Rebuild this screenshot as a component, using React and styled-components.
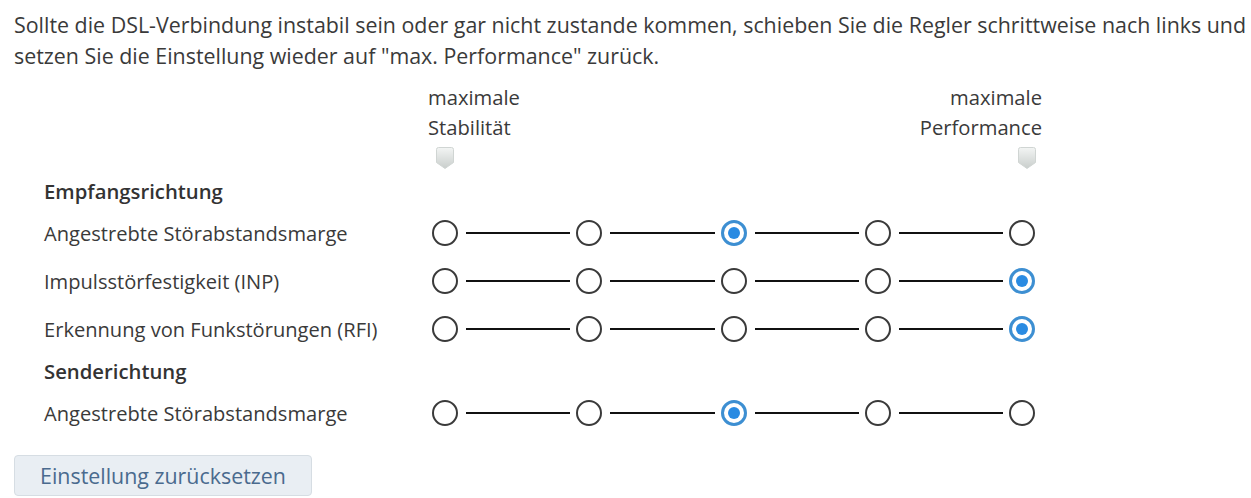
import React, { useState } from 'react'
import styled, { createGlobalStyle } from 'styled-components'

const GlobalStyle = createGlobalStyle`
  html, body {
    margin: 0;
    padding: 0;
    background: #ffffff;
  }
  body {
    font-family: "Open Sans", "Noto Sans", "Liberation Sans", sans-serif;
    color: #3a3a3a;
  }
`

const Page = styled.div`
  padding: 9px 0 0 14px;
  width: 1237px;
`

const Intro = styled.p`
  margin: 0;
  font-size: 21.4px;
  line-height: 31px;
  color: #3a3a3a;
  white-space: nowrap;
`

const Panel = styled.div`
  display: grid;
  grid-template-columns: 388px 603px;
  padding-left: 30px;
  margin-top: 11px;
`

const Scale = styled.div`
  grid-column: 2;
  display: flex;
  flex-direction: column;
  margin: 0 -7px 0 -4px;
`

const ScaleLabels = styled.div`
  display: flex;
  justify-content: space-between;
  font-size: 20.2px;
  line-height: 30px;
  color: #3a3a3a;
`

const ScaleLabel = styled.div`
  text-align: ${(p) => (p.$right ? 'right' : 'left')};
`

const Markers = styled.div`
  display: flex;
  justify-content: space-between;
  padding: 0 6px 0 8px;
  margin-top: 5px;
  height: 26px;
`

const Marker = () => (
  <svg width="18" height="22" viewBox="0 0 18 22">
    <defs>
      <linearGradient id="mk" x1="0" y1="0" x2="0" y2="1">
        <stop offset="0" stopColor="#f3f5f4" />
        <stop offset="1" stopColor="#c9cecc" />
      </linearGradient>
    </defs>
    <path
      d="M0.5 2.5 Q0.5 0.5 2.5 0.5 H15.5 Q17.5 0.5 17.5 2.5 V15.5 L9 21.5 L0.5 15.5 Z"
      fill="url(#mk)"
      stroke="#d0d5d3"
      strokeWidth="1"
    />
  </svg>
)

const Heading = styled.div`
  grid-column: 1 / -1;
  height: 36px;
  display: flex;
  align-items: center;
  font-size: 20.3px;
  font-weight: 600;
  color: #333;
`

const RowLabel = styled.div`
  height: 48px;
  display: flex;
  align-items: center;
  font-size: 20.1px;
  color: #3a3a3a;
`

const Track = styled.div`
  height: 48px;
  display: flex;
  align-items: center;
`

const Dot = styled.button`
  flex: none;
  box-sizing: border-box;
  width: 26px;
  height: 26px;
  padding: 0;
  border-radius: 50%;
  background: #fff;
  cursor: pointer;
  display: flex;
  align-items: center;
  justify-content: center;
  border: ${(p) => (p.$on ? '3px solid #3d8fd2' : '2.5px solid #3a3a3a')};

  &::after {
    content: '';
    display: ${(p) => (p.$on ? 'block' : 'none')};
    width: 12px;
    height: 12px;
    border-radius: 50%;
    background: #2a8be2;
  }
`

const Line = styled.span`
  flex: 1;
  height: 2px;
  background: #111;
  margin: 0 6px 0 8px;
`

const ResetButton = styled.button`
  margin-top: 18px;
  width: 298px;
  height: 41px;
  box-sizing: border-box;
  border: 1px solid #d6dde3;
  border-radius: 4px;
  background: #e9eef3;
  color: #4a6a8e;
  font-family: inherit;
  font-size: 21.4px;
  padding: 0;
  cursor: pointer;
`

const Slider = ({ value, onChange }) => (
  <Track>
    {[0, 1, 2, 3, 4].map((i) => (
      <React.Fragment key={i}>
        {i > 0 && <Line />}
        <Dot $on={value === i} onClick={() => onChange(i)} aria-label={`Stufe ${i + 1}`} />
      </React.Fragment>
    ))}
  </Track>
)

const defaults = { snr: 2, inp: 4, rfi: 4, snrUp: 2 }

export default function App() {
  const [vals, setVals] = useState(defaults)
  const set = (k) => (v) => setVals((s) => ({ ...s, [k]: v }))

  return (
    <Page>
      <GlobalStyle />
      <Intro>
        Sollte die DSL-Verbindung instabil sein oder gar nicht zustande kommen, schieben Sie die Regler schrittweise nach links und
        <br />
        setzen Sie die Einstellung wieder auf "max. Performance" zurück.
      </Intro>

      <Panel>
        <Scale>
          <ScaleLabels>
            <ScaleLabel>maximale<br />Stabilität</ScaleLabel>
            <ScaleLabel $right>maximale<br />Performance</ScaleLabel>
          </ScaleLabels>
          <Markers>
            <Marker />
            <Marker />
          </Markers>
        </Scale>

        <Heading>Empfangsrichtung</Heading>
        <RowLabel>Angestrebte Störabstandsmarge</RowLabel>
        <Slider value={vals.snr} onChange={set('snr')} />
        <RowLabel>Impulsstörfestigkeit (INP)</RowLabel>
        <Slider value={vals.inp} onChange={set('inp')} />
        <RowLabel>Erkennung von Funkstörungen (RFI)</RowLabel>
        <Slider value={vals.rfi} onChange={set('rfi')} />

        <Heading>Senderichtung</Heading>
        <RowLabel>Angestrebte Störabstandsmarge</RowLabel>
        <Slider value={vals.snrUp} onChange={set('snrUp')} />
      </Panel>

      <ResetButton onClick={() => setVals(defaults)}>Einstellung zurücksetzen</ResetButton>
    </Page>
  )
}
